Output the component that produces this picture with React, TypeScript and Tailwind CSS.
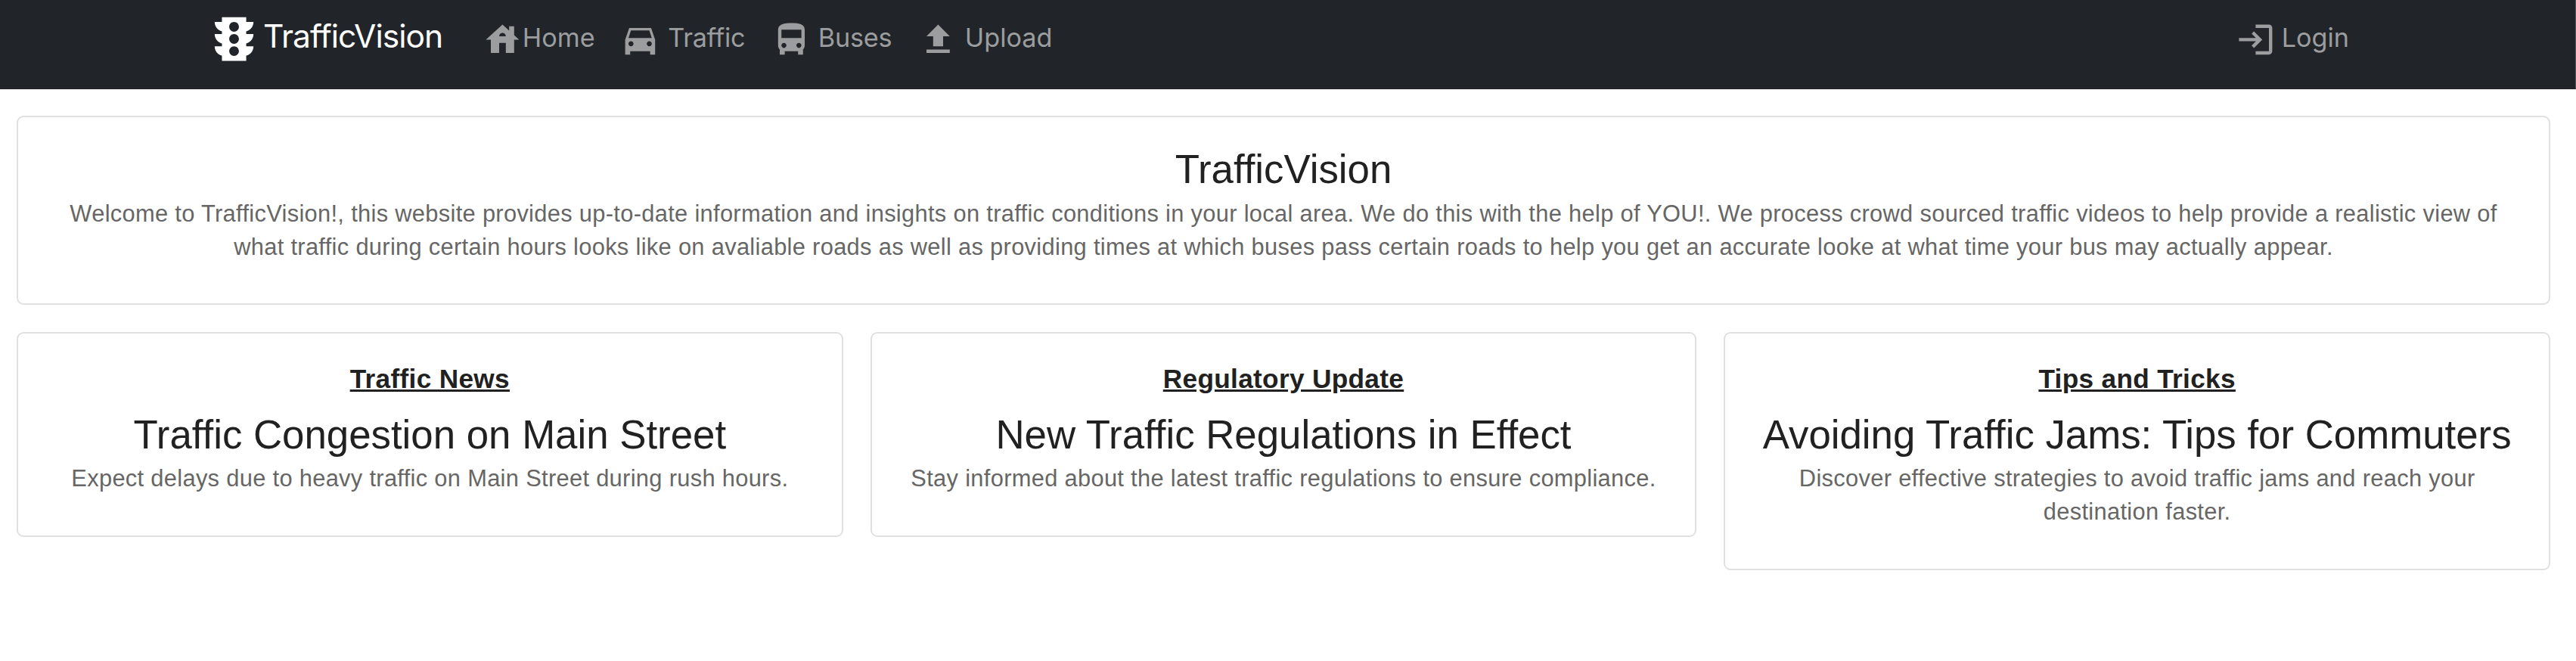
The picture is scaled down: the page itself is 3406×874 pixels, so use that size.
import { type ReactNode } from "react";

function Icon({ d, className }: { d: string; className: string }) {
  return (
    <svg viewBox="0 0 24 24" fill="currentColor" className={className} aria-hidden="true">
      <path d={d} />
    </svg>
  );
}

const icons = {
  signal:
    "M20 10h-3V8.86c1.72-.45 3-2 3-3.86h-3V3H7v2H4c0 1.86 1.28 3.41 3 3.86V10H4c0 1.86 1.28 3.41 3 3.86V15H4c0 1.86 1.28 3.41 3 3.86V21h10v-2.14c1.72-.45 3-2 3-3.86h-3v-1.14c1.72-.45 3-2 3-3.86zm-8 9c-1.11 0-2-.9-2-2s.89-2 2-2c1.1 0 2 .9 2 2s-.89 2-2 2zm0-5c-1.11 0-2-.9-2-2s.89-2 2-2c1.1 0 2 .9 2 2s-.89 2-2 2zm0-5c-1.11 0-2-.9-2-2 0-1.11.89-2 2-2 1.1 0 2 .89 2 2 0 1.1-.89 2-2 2z",
  home: "M19 9.3V4h-3v2.6L12 3 2 12h3v8h5v-6h4v6h5v-8h3l-3-2.7zm-9 .7c0-1.1.9-2 2-2s2 .9 2 2h-4z",
  car: "M18.58 5H5.43L3 12v9h3v-2h12v2h3v-9l-2.42-7zM6.5 16c-.83 0-1.5-.67-1.5-1.5S5.67 13 6.5 13s1.5.67 1.5 1.5S7.33 16 6.5 16zm11 0c-.83 0-1.5-.67-1.5-1.5s.67-1.5 1.5-1.5 1.5.67 1.5 1.5-.67 1.5-1.5 1.5zM5 11l1.5-4.5h11L19 11H5z",
  bus: "M12 2C8 2 4 2.5 4 6v9.5c0 .95.38 1.81 1 2.44V21h3v-2h8v2h3v-3.06c.62-.63 1-1.49 1-2.44V6c0-3.5-3.58-4-8-4zM7.5 17c-.83 0-1.5-.67-1.5-1.5S6.67 14 7.5 14s1.5.67 1.5 1.5S8.33 17 7.5 17zm9 0c-.83 0-1.5-.67-1.5-1.5s.67-1.5 1.5-1.5 1.5.67 1.5 1.5-.67 1.5-1.5 1.5zM18 11H6V6h12v5z",
  upload: "M9 16h6v-6h4l-7-7-7 7h4v6zm-4 2h14v2H5v-2z",
  login:
    "M11 7 9.6 8.4l2.6 2.6H2v2h10.2l-2.6 2.6L11 17l5-5-5-5zm9 12h-8v2h8c1.1 0 2-.9 2-2V5c0-1.1-.9-2-2-2h-8v2h8v14z",
};

function NavItem({ d, className, children }: { d: string; className: string; children: ReactNode }) {
  return (
    <a className={`mt-[26px] flex shrink-0 items-center text-[34.2px] leading-[47.6px] whitespace-nowrap text-[#9b9d9e] ${className}`}>
      <Icon d={d} className="size-[52.8px] shrink-0" />
      <span className="pb-[5.2px]">{children}</span>
    </a>
  );
}

function Card({ label, title, children }: { label?: string; title: string; children: ReactNode }) {
  return (
    <section className="rounded-[9px] border-2 border-[#e0e0e0] px-[35.2px] pt-[34.4px] pb-[52.4px] text-center">
      {label && (
        <p className="mb-[12px] text-[35.2px] leading-[52.8px] font-bold tracking-[0.00938em] text-[#212121] underline">{label}</p>
      )}
      <h2 className="mb-[1.2px] text-[52.8px] leading-[70.4px] whitespace-nowrap text-[#212121]">{title}</h2>
      <p className="text-[30.8px] leading-[44px] tracking-[0.01071em] text-[#666666]">{children}</p>
    </section>
  );
}

export default function App() {
  return (
    <div className="min-h-[874px] w-full bg-white font-['Liberation_Sans',Arial,sans-serif]">
      <header className="flex h-[118px] items-start border-r border-b border-r-[#55585b] border-b-[#231e28] bg-[#212529] pl-[271px] font-[Inter,sans-serif]">
        <a className="mt-[13px] flex w-[367px] shrink-0 items-center text-[42.5px] leading-[66px] tracking-[-1px] whitespace-nowrap text-white">
          <Icon d={icons.signal} className="size-[77px] shrink-0" />
          <span className="pb-[8px]">TrafficVision</span>
        </a>
        <NavItem d={icons.home} className="w-[182px]">Home</NavItem>
        <NavItem d={icons.car} className="w-[200px] gap-[10.5px] tracking-[-0.3px]">Traffic</NavItem>
        <NavItem d={icons.bus} className="w-[194px] gap-[9px] tracking-[-0.2px]">Buses</NavItem>
        <NavItem d={icons.upload} className="gap-[9px]">Upload</NavItem>
        <NavItem d={icons.login} className="mr-[299px] ml-auto gap-[8px]">Login</NavItem>
      </header>
      <main className="flex flex-col gap-[35.2px] pt-[35px] pr-[34px] pl-[22px]">
        <Card title="TrafficVision">
          Welcome to TrafficVision!, this website provides up-to-date information and insights on traffic conditions in your local area. We do this with the help of YOU!. We process crowd sourced traffic videos to help provide a realistic view of what traffic during certain hours looks like on avaliable roads as well as providing times at which buses pass certain roads to help you get an accurate looke at what time your bus may actually appear.
        </Card>
        <div className="grid grid-cols-3 items-start gap-[36px]">
          <Card label="Traffic News" title="Traffic Congestion on Main Street">
            Expect delays due to heavy traffic on Main Street during rush hours.
          </Card>
          <Card label="Regulatory Update" title="New Traffic Regulations in Effect">
            Stay informed about the latest traffic regulations to ensure compliance.
          </Card>
          <Card label="Tips and Tricks" title="Avoiding Traffic Jams: Tips for Commuters">
            Discover effective strategies to avoid traffic jams and reach your destination faster.
          </Card>
        </div>
      </main>
    </div>
  );
}
